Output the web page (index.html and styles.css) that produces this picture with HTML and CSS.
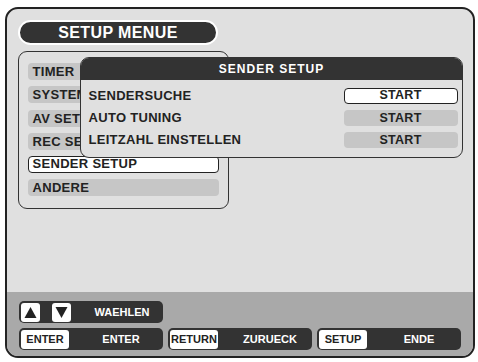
FILE: index.html
```html
<!DOCTYPE html>
<html lang="de">
<head>
  <meta charset="UTF-8" />
  <title>Setup Menue</title>
  <link rel="stylesheet" href="styles.css">
</head>
<body>

  <div class="screen">
    <div class="main">
      <div class="title">SETUP MENUE</div>

      <div class="menu">
        <div class="item">TIMER</div>
        <div class="item">SYSTEM</div>
        <div class="item">AV SETUP</div>
        <div class="item">REC SETUP</div>
        <div class="item active">SENDER SETUP</div>
        <div class="item">ANDERE</div>
      </div>

      <div class="popup">
        <div class="popup-head">SENDER SETUP</div>
        <div class="popup-body">
          <div class="row">
            <span>SENDERSUCHE</span>
            <span class="btn active">START</span>
          </div>
          <div class="row">
            <span>AUTO TUNING</span>
            <span class="btn">START</span>
          </div>
          <div class="row">
            <span>LEITZAHL EINSTELLEN</span>
            <span class="btn">START</span>
          </div>
        </div>
      </div>
    </div>

    <div class="footer">
      <div class="keys">
        <div class="pill">
          <span class="key arrow">
            <svg width="19" height="19" viewBox="0 0 19 19"><polygon points="3.5,15 15.5,15 9.5,4" fill="#222"/></svg>
          </span>
          <span class="key arrow">
            <svg width="19" height="19" viewBox="0 0 19 19"><polygon points="3.5,4 15.5,4 9.5,15" fill="#222"/></svg>
          </span>
          <span class="label">WAEHLEN</span>
        </div>
      </div>
      <div class="keys">
        <div class="pill">
          <span class="key">ENTER</span>
          <span class="label">ENTER</span>
        </div>
        <div class="pill">
          <span class="key">RETURN</span>
          <span class="label">ZURUECK</span>
        </div>
        <div class="pill">
          <span class="key">SETUP</span>
          <span class="label">ENDE</span>
        </div>
      </div>
    </div>
  </div>

</body>
</html>
```

FILE: styles.css
```css
body {
  margin: 0;
  background-color: #fff;
  font-family: 'Liberation Sans', Arial, sans-serif;
  font-weight: bold;
  color: #222;
}

.screen {
  box-sizing: border-box;
  width: 470px;
  height: 351px;
  margin: 7px 0 0 5px;
  border: 2px solid #222;
  border-radius: 13px;
  background-color: #e0e0e0;
  overflow: hidden;
  display: flex;
  flex-direction: column;
}

.main {
  position: relative;
  height: 283px;
  padding: 11px 0 0 11px;
  box-sizing: border-box;
}

/* titel */
.title {
  box-sizing: border-box;
  width: 200px;
  height: 25px;
  background-color: #333;
  border: 2px solid #fff;
  border-radius: 13px;
  color: #fff;
  font-size: 16px;
  letter-spacing: 0.4px;
  line-height: 21px;
  text-align: center;
}

/* linkes menue */
.menu {
  box-sizing: border-box;
  width: 211px;
  height: 158px;
  margin-top: 6px;
  border: 1.5px solid #333;
  border-radius: 9px;
  padding: 11px 9.5px 0 8.5px;
  display: flex;
  flex-direction: column;
  gap: 6.3px;
}

.item {
  box-sizing: border-box;
  height: 17px;
  line-height: 17px;
  padding-left: 5px;
  background-color: #c6c6c6;
  border-radius: 4px;
  font-size: 13px;
  letter-spacing: 0.3px;
}

.item.active {
  background-color: #fff;
  border: 1.5px solid #222;
  line-height: 14px;
  padding-left: 4px;
}

/* sender setup fenster */
.popup {
  position: absolute;
  left: 73px;
  top: 48px;
  width: 383px;
  height: 101px;
  box-sizing: border-box;
  border: 1.5px solid #333;
  border-radius: 9px;
  background-color: #e0e0e0;
  overflow: hidden;
}

.popup-head {
  height: 22px;
  line-height: 22px;
  background-color: #333;
  color: #fff;
  text-align: center;
  font-size: 12px;
  letter-spacing: 1px;
}

.popup-body {
  padding: 7.5px 4.5px 0 7.5px;
  display: flex;
  flex-direction: column;
  gap: 6px;
}

.row {
  display: flex;
  justify-content: space-between;
  align-items: center;
  height: 16px;
  font-size: 13px;
  letter-spacing: 0.3px;
}

.btn {
  box-sizing: border-box;
  width: 114px;
  height: 16px;
  line-height: 16px;
  text-align: center;
  background-color: #c6c6c6;
  border-radius: 4px;
  font-size: 12.5px;
}

.btn.active {
  background-color: #fff;
  border: 1.5px solid #222;
  line-height: 13px;
}

/* tastenleiste */
.footer {
  flex: 1;
  background-color: #a9a9a9;
  padding: 9px 0 0 12px;
  display: flex;
  flex-direction: column;
  gap: 5px;
}

.keys {
  display: flex;
  gap: 5px;
}

.pill {
  box-sizing: border-box;
  width: 144px;
  height: 22px;
  padding: 0 2px;
  background-color: #333;
  border-radius: 5px;
  display: flex;
  align-items: center;
  gap: 12px;
}

.key {
  box-sizing: border-box;
  width: 48px;
  height: 19px;
  line-height: 19px;
  background-color: #fff;
  border-radius: 3px;
  color: #222;
  font-size: 11px;
  text-align: center;
}

.key.arrow {
  width: 19px;
}

.key svg {
  display: block;
}

.label {
  flex: 1;
  color: #fff;
  font-size: 11px;
  text-align: center;
}
```
